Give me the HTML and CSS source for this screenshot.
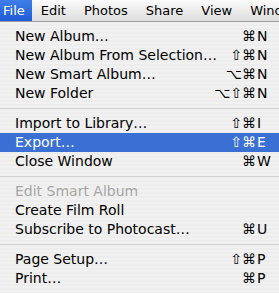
FILE: index.html
```html
<!DOCTYPE html>
<html lang="en">
<head>
  <meta charset="UTF-8" />
  <title>iPhoto File Menu</title>
  <link rel="stylesheet" href="styles.css">
</head>
<body>
  <!-- Menu bar -->
  <nav class="menubar">
    <span class="mb-item active">File</span>
    <span class="mb-item">Edit</span>
    <span class="mb-item">Photos</span>
    <span class="mb-item">Share</span>
    <span class="mb-item">View</span>
    <span class="mb-item">Window</span>
  </nav>

  <!-- File menu -->
  <ul class="menu">
    <li class="row"><span class="label">New Album…</span><span class="mods">⌘</span><span class="key">N</span></li>
    <li class="row"><span class="label">New Album From Selection…</span><span class="mods">⇧⌘</span><span class="key">N</span></li>
    <li class="row"><span class="label">New Smart Album…</span><span class="mods">⌥⌘</span><span class="key">N</span></li>
    <li class="row"><span class="label">New Folder</span><span class="mods">⌥⇧⌘</span><span class="key">N</span></li>
    <li class="sep"></li>
    <li class="row"><span class="label">Import to Library…</span><span class="mods">⇧⌘</span><span class="key">I</span></li>
    <li class="row selected"><span class="label">Export…</span><span class="mods">⇧⌘</span><span class="key">E</span></li>
    <li class="row"><span class="label">Close Window</span><span class="mods">⌘</span><span class="key">W</span></li>
    <li class="sep"></li>
    <li class="row disabled"><span class="label">Edit Smart Album</span><span class="mods"></span><span class="key"></span></li>
    <li class="row"><span class="label">Create Film Roll</span><span class="mods"></span><span class="key"></span></li>
    <li class="row"><span class="label">Subscribe to Photocast…</span><span class="mods">⌘</span><span class="key">U</span></li>
    <li class="sep"></li>
    <li class="row"><span class="label">Page Setup…</span><span class="mods">⇧⌘</span><span class="key">P</span></li>
    <li class="row"><span class="label">Print…</span><span class="mods">⌘</span><span class="key">P</span></li>
  </ul>
</body>
</html>
```

FILE: styles.css
```css
body        {margin:0; width:279px; height:293px; overflow:hidden; background:#f0f0f0;
             font-family:"DejaVu Sans", "Lucida Grande", sans-serif; font-size:14px; color:#000;}

.menubar    {display:flex; height:21px; line-height:21px; border-bottom:1px solid #9c9c9c; font-size:13px;
             background:linear-gradient(#fbfbfb, #ececec 50%, #dedede); white-space:nowrap; overflow:hidden;}
.mb-item    {padding:0 9px; flex:none;}
.mb-item:first-child {padding:0 7px 0 3px;}
.mb-item.active {background:linear-gradient(#3f7ee8, #1f5bd6); color:#fff;}

.menu       {list-style:none; margin:0; padding:5px 0;
             background:repeating-linear-gradient(#f1f1f1 0 2px, #ededed 2px 4px);}
.row        {display:flex; height:19px; line-height:19px; padding-left:15px; white-space:nowrap;}
.row .label {flex:1;}
.row .mods  {text-align:right;}
.row .key   {width:22px; padding-left:1px;}
.row.selected {background:#3a6fd4; color:#fff;}
.row.disabled {color:#a5a5a5;}
.sep        {height:11px; padding-top:5px; box-sizing:border-box;}
.sep::after {content:""; display:block; height:1px; background:#d2d2d2;}
```
